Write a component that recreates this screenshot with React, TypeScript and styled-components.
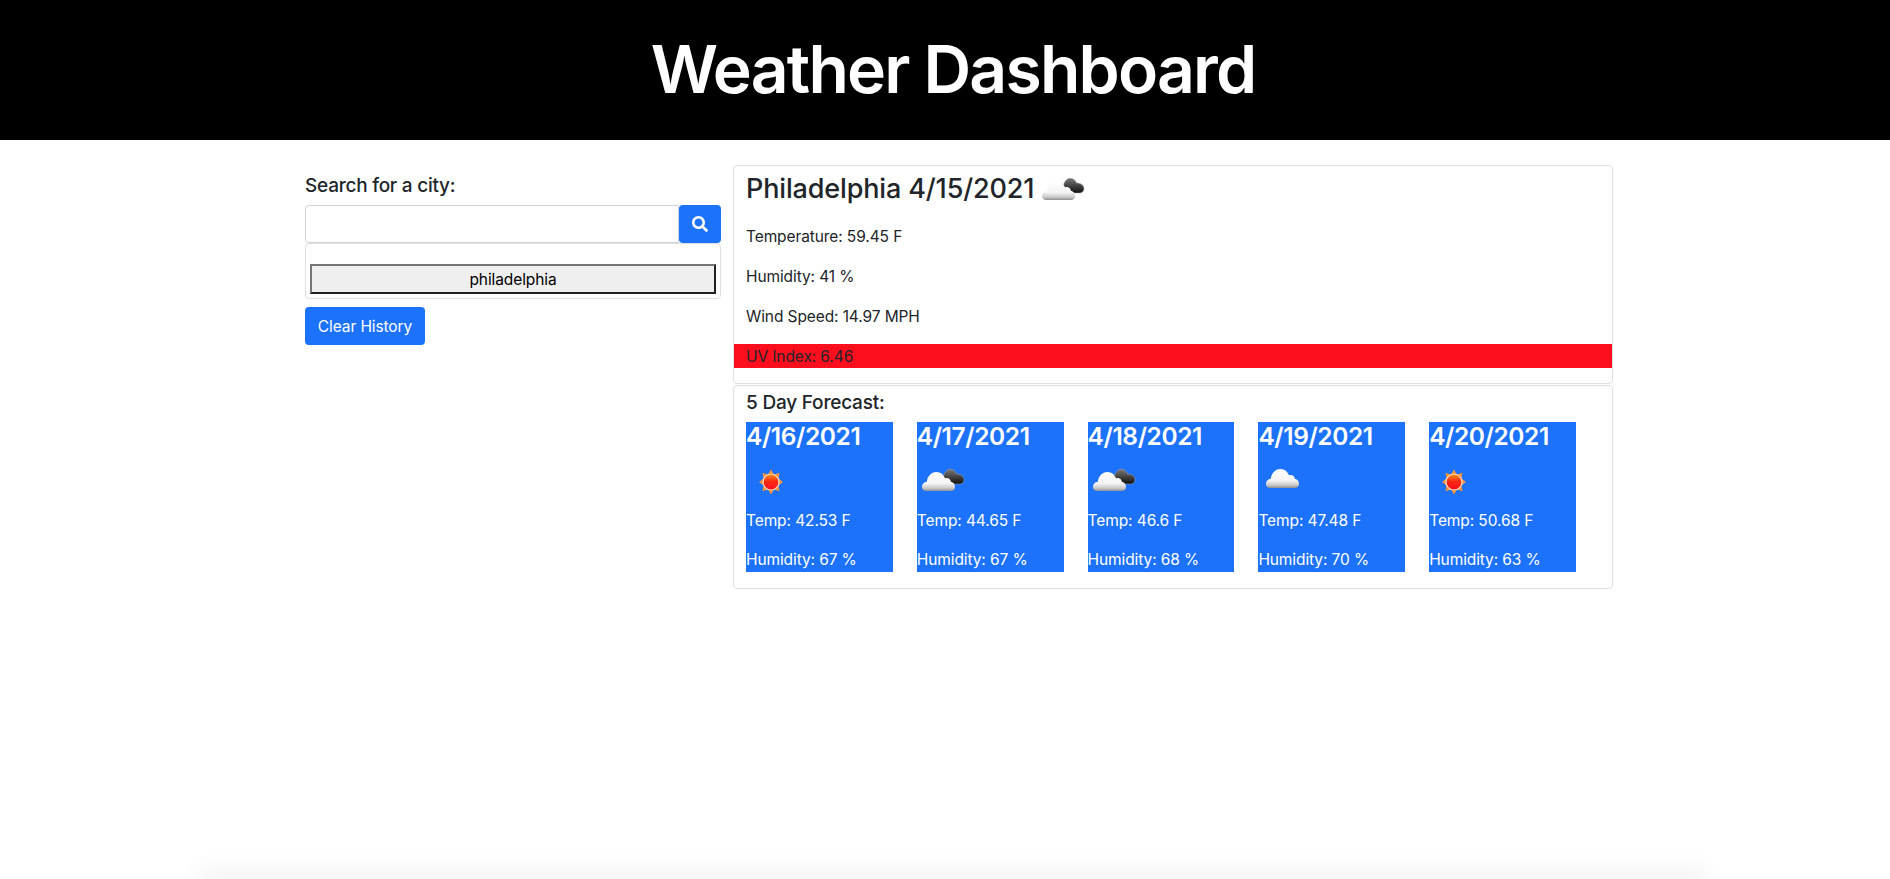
import React from 'react'
import styled, { createGlobalStyle } from 'styled-components'
import { FaSearch } from 'react-icons/fa'

const BLUE = '#1c72fb'
const RED = '#ff0e1d'
const BORDER = '#dedfe0'

const GlobalStyle = createGlobalStyle`
  * {
    box-sizing: border-box;
  }

  html,
  body {
    margin: 0;
    height: 100%;
    overflow: hidden;
    background: #fff;
    color: #212529;
    font-family: Inter, 'Liberation Sans', sans-serif;
    font-size: 16px;
    line-height: 1.5;
  }

  #root {
    height: 100%;
  }
`

const Page = styled.div`
  display: flex;
  flex-direction: column;
  height: 879px;
  overflow: hidden;
`

const Header = styled.header`
  background: #000;
  color: #fff;
  display: flex;
  flex-shrink: 0;
  height: 140px;
  align-items: center;
  justify-content: center;
  padding-left: 16px;
`

const Title = styled.h1`
  font-size: 66px;
  font-weight: 600;
  letter-spacing: -1.8px;
  line-height: 1.2;
  margin: 0;
`

const Main = styled.main`
  display: flex;
  flex: 1;
  margin: 25px 0 0 293px;
  width: 1320px;
`

const SidePanel = styled.section`
  display: flex;
  flex-direction: column;
  flex-shrink: 0;
  padding: 0 12px;
  width: 440px;
`

const SearchLabel = styled.label`
  display: block;
  font-size: 19px;
  font-weight: 500;
  letter-spacing: -0.24px;
  line-height: 26px;
  height: 24px;
  margin: 8px 0;
`

const SearchRow = styled.div`
  display: flex;
  height: 38px;
`

const SearchInput = styled.input`
  background: #fff;
  border: 1px solid #ced4da;
  border-radius: 4px 0 0 4px;
  flex: 1;
  min-width: 0;
`

const SearchButton = styled.button`
  align-items: center;
  background: ${BLUE};
  border: 0;
  border-radius: 4px;
  color: #fff;
  display: flex;
  font-size: 16px;
  justify-content: center;
  padding: 0;
  width: 42px;
`

const HistoryCard = styled.div`
  border: 1px solid ${BORDER};
  border-radius: 4px;
  height: 56px;
  padding: 20px 4px 0;
`

const HistoryButton = styled.button`
  background: #efefef;
  border: 2px solid;
  border-color: #767676 #212121 #212121 #767676;
  color: #000;
  display: block;
  font-family: inherit;
  font-size: 15.5px;
  height: 30px;
  letter-spacing: -0.1px;
  line-height: 26px;
  padding: 1px 0 0;
  width: 100%;
`

const ClearButton = styled.button`
  align-self: flex-start;
  background: ${BLUE};
  border: 0;
  border-radius: 4px;
  color: #fff;
  font-family: inherit;
  font-size: 15.5px;
  height: 38px;
  letter-spacing: -0.1px;
  margin-top: 8px;
  padding: 0;
  width: 120px;
`

const Results = styled.section`
  display: flex;
  flex: 1;
  flex-direction: column;
`

const Card = styled.div`
  border: 1px solid ${BORDER};
  border-radius: 4px;
`

const CurrentCard = styled(Card)`
  height: 219px;
`

const ForecastCard = styled(Card)`
  height: 204px;
  margin-top: 1px;
  padding: 0 12px;
`

const CityHeading = styled.h3`
  display: flex;
  font-size: 27px;
  font-weight: 500;
  height: 50px;
  line-height: 34px;
  margin: 0 0 8px;
  padding-left: 12px;
`

const CityName = styled.span`
  letter-spacing: -0.15px;
  margin: 6px 3px 0 0;
`

const Stat = styled.p<{ $alert?: boolean }>`
  background: ${props => (props.$alert ? RED : 'transparent')};
  font-size: 15.5px;
  height: 24px;
  letter-spacing: -0.1px;
  line-height: 26px;
  margin: 0 0 16px;
  padding-left: 12px;
`

const ForecastHeading = styled.h5`
  font-size: 19px;
  font-weight: 500;
  letter-spacing: -0.2px;
  line-height: 24px;
  margin: 5px 0 7px;
`

const ForecastRow = styled.div`
  display: flex;
  gap: 24px;
`

const DayCard = styled.div`
  background: ${BLUE};
  color: #fff;
  height: 150px;
  width: 146.8px;
`

const DayDate = styled.h4`
  font-size: 24.5px;
  font-weight: 600;
  letter-spacing: -0.4px;
  line-height: 29px;
  margin: 0 0 6px;
`

const DayStat = styled.p`
  font-size: 15.5px;
  height: 24px;
  letter-spacing: -0.1px;
  line-height: 26px;
  margin: 1px 0 15px;

  &:last-child {
    margin-bottom: 0;
  }
`

const IconSvg = styled.svg`
  display: block;
  flex-shrink: 0;
  height: 50px;
  width: 50px;
`

// the shadow of a footer sitting just under the fold
const FooterShadow = styled.footer`
  box-shadow: 0 0 24px 8px rgba(0, 0, 0, 0.07);
  flex-shrink: 0;
  height: 0;
  margin: 0 0 0 208px;
  width: 1490px;
`

const CLOUD =
  'M4 19C1.5 19 0 17.2 0 15C0 12.3 2 10 4.8 9.8C5.2 4.6 9.2 0 14.3 0C18.6 0 21.8 2.8 23 6.4C25.8 5.2 28.4 7 29 10C31.4 10 33 12.4 33 15C33 17.4 31.2 19 29 19Z'

const CloudDefs = () => (
  <defs>
    <linearGradient id="cloudLight" x1="0" y1="0" x2="0" y2="1">
      <stop offset="0" stopColor="#ffffff" />
      <stop offset="0.6" stopColor="#f4f4f4" />
      <stop offset="0.85" stopColor="#c9c9c9" />
      <stop offset="1" stopColor="#8e8e8e" />
    </linearGradient>
    <linearGradient id="cloudDark" x1="0" y1="0" x2="0" y2="1">
      <stop offset="0" stopColor="#7a7a7a" />
      <stop offset="0.55" stopColor="#3f3f3f" />
      <stop offset="1" stopColor="#111111" />
    </linearGradient>
  </defs>
)

const SunIcon = () => (
  <IconSvg viewBox="0 0 50 50">
    <defs>
      <linearGradient id="sunFill" x1="0" y1="0" x2="0" y2="1">
        <stop offset="0" stopColor="#f99a1c" />
        <stop offset="0.45" stopColor="#fb2a12" />
        <stop offset="1" stopColor="#fb0d1c" />
      </linearGradient>
    </defs>
    <path
      d="M25 12.5L28 17.5L33.5 15.8L32.5 21.5L37 25L32.5 28.5L33.5 34.2L28 32.5L25 37.5L22 32.5L16.5 34.2L17.5 28.5L13 25L17.5 21.5L16.5 15.8L22 17.5Z"
      fill="#f4913a"
    />
    <circle cx="25" cy="25" r="8" fill="url(#sunFill)" stroke="#fbe3c8" strokeWidth="1.2" />
  </IconSvg>
)

const BrokenCloudIcon = () => (
  <IconSvg viewBox="0 0 50 50">
    <CloudDefs />
    <path
      d="M30 27C27 27 26 25 25.6 22.5C26.2 17.5 28.8 12.6 33 12.2C36.4 12 38.6 14.4 39.6 17C43 16.8 47 19 47 22.6C47 25.6 45 27 42.6 27Z"
      fill="url(#cloudDark)"
      stroke="#a2a2a2"
      strokeWidth="0.5"
    />
    <path d={CLOUD} transform="translate(5 15)" fill="url(#cloudLight)" />
  </IconSvg>
)

const CloudIcon = () => (
  <IconSvg viewBox="0 0 50 50">
    <CloudDefs />
    <path d={CLOUD} transform="translate(8 12)" fill="url(#cloudLight)" />
  </IconSvg>
)

const ICONS = { sun: SunIcon, broken: BrokenCloudIcon, cloud: CloudIcon }

const forecast: { date: string; icon: keyof typeof ICONS; temp: string; humidity: string }[] = [
  { date: '4/16/2021', icon: 'sun', temp: '42.53', humidity: '67' },
  { date: '4/17/2021', icon: 'broken', temp: '44.65', humidity: '67' },
  { date: '4/18/2021', icon: 'broken', temp: '46.6', humidity: '68' },
  { date: '4/19/2021', icon: 'cloud', temp: '47.48', humidity: '70' },
  { date: '4/20/2021', icon: 'sun', temp: '50.68', humidity: '63' },
]

export default function App() {
  return (
    <Page>
      <GlobalStyle />
      <Header>
        <Title>Weather Dashboard</Title>
      </Header>
      <Main>
        <SidePanel>
          <SearchLabel htmlFor="city">Search for a city:</SearchLabel>
          <SearchRow>
            <SearchInput id="city" type="text" />
            <SearchButton aria-label="Search">
              <FaSearch />
            </SearchButton>
          </SearchRow>
          <HistoryCard>
            <HistoryButton>philadelphia</HistoryButton>
          </HistoryCard>
          <ClearButton>Clear History</ClearButton>
        </SidePanel>
        <Results>
          <CurrentCard>
            <CityHeading>
              <CityName>Philadelphia 4/15/2021</CityName>
              <BrokenCloudIcon />
            </CityHeading>
            <Stat>Temperature: 59.45 F</Stat>
            <Stat>Humidity: 41 %</Stat>
            <Stat>Wind Speed: 14.97 MPH</Stat>
            <Stat $alert>UV Index: 6.46</Stat>
          </CurrentCard>
          <ForecastCard>
            <ForecastHeading>5 Day Forecast:</ForecastHeading>
            <ForecastRow>
              {forecast.map(day => {
                const Icon = ICONS[day.icon]
                return (
                  <DayCard key={day.date}>
                    <DayDate>{day.date}</DayDate>
                    <Icon />
                    <DayStat>Temp: {day.temp} F</DayStat>
                    <DayStat>Humidity: {day.humidity} %</DayStat>
                  </DayCard>
                )
              })}
            </ForecastRow>
          </ForecastCard>
        </Results>
      </Main>
      <FooterShadow />
    </Page>
  )
}
